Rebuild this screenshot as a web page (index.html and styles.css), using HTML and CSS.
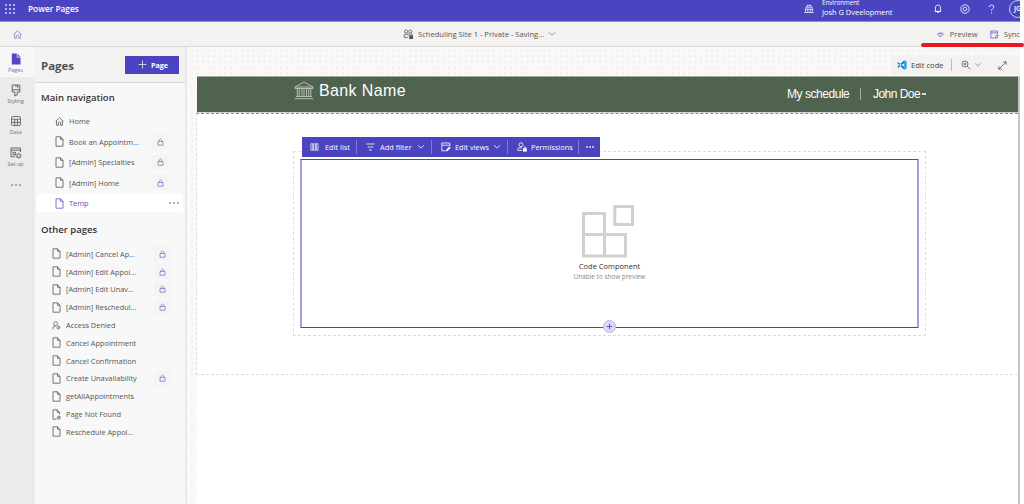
FILE: index.html
```html
<!DOCTYPE html>
<html lang="en">
<head>
<meta charset="utf-8">
<title>Power Pages</title>
<link rel="stylesheet" href="styles.css">
</head>
<body>
<svg class="sprite" aria-hidden="true">
  <symbol id="page" viewBox="0 0 9 11"><path d="M1 .8h4.5L8 3.3v6.9H1zM5.5.8v2.5H8"/></symbol>
  <symbol id="page-lock" viewBox="0 0 9 11"><path d="M4.5 10.2H1V.8h4.2L7.5 3.3v2M5.2.8v2.5h2.3"/><circle cx="6.9" cy="8.6" r="1.5"/><path d="M6 9.5l1.8-1.8"/></symbol>
  <symbol id="house" viewBox="0 0 9 9"><path d="M.6 4.5L4.5.8l3.9 3.7M1.6 3.8v4.5h1.8V5.5q1.1-1.4 2.2 0v2.8h1.8V3.8"/></symbol>
  <symbol id="lock" viewBox="0 0 7 8"><path d="M1 3.5h5v3.7H1zM2.1 3.4V2.2q1.4-2.6 2.8 0v1.2"/></symbol>
  <symbol id="person" viewBox="0 0 10 10"><circle cx="4" cy="3" r="2.2"/><path d="M.7 9.3Q.9 5.4 4 5.3"/><circle cx="7.2" cy="7.3" r="1.6"/><path d="M6.1 8.4l2.2-2.2"/></symbol>
  <symbol id="chevron" viewBox="0 0 8 6"><path d="M1 1.2l3 3 3-3"/></symbol>
</svg>
<div class="app">
  <header class="topbar">
    <svg class="waffle" viewBox="0 0 10 10"><path d="M0 1h2M4 1h2M8 1h2M0 5h2M4 5h2M8 5h2M0 9h2M4 9h2M8 9h2"/></svg>
    <span class="brand">Power Pages</span>
    <div class="account">
      <svg class="env-icon" viewBox="0 0 10 10"><path d="M2 4.6V3.2h1V1.3h4v1.9h1v1.4M.8 5.2h8.4M1.6 5.2v2.5M8.4 5.2v2.5M.3 8.5h9.4M3.3 3.2h3.4M3.8 5.2v2.5M6.2 5.2v2.5"/></svg>
      <div class="env"><span>Environment</span><span class="env-name">Josh G Dveelopment</span></div>
      <svg class="bell" viewBox="0 0 8 10"><path d="M1.5 7.3V3Q1.7 1 4 1t2.5 2v4.3zM.7 7.5h6.6M3 8q1 1.6 2 0"/></svg>
      <svg class="gear" viewBox="0 0 10 10"><path d="M3.6.8h2.8l.6 1.1 1.4.3.9 2-.7.8.7 1.3-1 1.6-1.3.2-.7 1.2H3.7L3 8.1 1.6 7.8.7 6.1 1.3 5 .7 3.7l1-1.5L3 1.9z"/><circle cx="5" cy="5" r="1.8"/></svg>
      <svg class="help" viewBox="0 0 7 10"><path d="M1.2 3Q1.3 1 3.5 1q2.3 0 2.3 1.9c0 1.7-2.3 1.9-2.3 4M3.5 8.3v1.2"/></svg>
      <span class="avatar">JG</span>
    </div>
  </header>
  <div class="commandbar">
    <svg class="home" viewBox="0 0 9 9"><use href="#house"/></svg>
    <div class="site">
      <svg class="site-icon" viewBox="0 0 11 10"><circle cx="3.1" cy="2.6" r="1.6"/><circle cx="7.4" cy="2.6" r="1.6"/><path d="M4.8 8.4H1.2Q.5 4.9 3.1 5q2.2.1 2.2 1.6M5.4 5.1q3.7-.7 4.2.7"/><path class="solid" d="M6.2 6.2h3.8V10H6.2z"/></svg>
      <span>Scheduling Site 1 - Private - Saving...</span>
      <svg class="chev" viewBox="0 0 8 6"><use href="#chevron"/></svg>
    </div>
    <div class="preview">
      <svg class="eye" viewBox="0 0 9 7"><path d="M.8 3.7Q4.4-.1 8.2 3.7"/><circle cx="4.5" cy="4" r="1.6"/></svg>
      <span class="preview-label">Preview</span>
      <svg class="sync" viewBox="0 0 9 9"><path d="M4 8H.8V1h6.7v3M.8 2.9h6.7M5 6q1.5-1.5 3 0M8 7.3q-1.5 1.5-3 0M8 4.7V6H6.7M5 8.6V7.3h1.3"/></svg>
      <span>Sync</span>
    </div>
  </div>
  <span class="redline"></span>
  <div class="workspace">
    <nav class="rail">
      <a class="rail-item current"><svg viewBox="0 0 10 12"><path class="solid" d="M.8.5h5v4h3.7v7H.8zM6.6.7l2.8 3H6.6z"/></svg><span>Pages</span></a>
      <a class="rail-item"><svg viewBox="0 0 10 12"><path d="M1.2 1h7.6v7H6.2v2.8L3.8 12V8H1.2zM1.2 5.8h7.6M5 1v2M6.8 1v3"/></svg><span>Styling</span></a>
      <a class="rail-item"><svg viewBox="0 0 11 12"><rect x=".6" y="1" width="9.8" height="10" rx="1.5"/><path d="M.6 4h9.8M.6 7.5h9.8M4 4v7M7.2 4v7"/></svg><span>Data</span></a>
      <a class="rail-item"><svg class="wide" viewBox="0 0 12 12"><path d="M5 9.8H1V1h9.5v4M1 3.2h9.5M3 5.3h2.5v2.5H3z"/><circle cx="8.6" cy="8.7" r="1.8"/><path d="M8.6 5.9v1M8.6 10.5v1M5.8 8.7h1M10.4 8.7h1M6.6 6.7l.8.8M9.9 10l.8.8M10.6 6.7l-.8.8M7.3 10l-.8.8"/></svg><span>Set up</span></a>
      <svg class="more rail-more" viewBox="0 0 10 2"><path d="M.5 1h1.3M4.4 1h1.3M8.3 1h1.3"/></svg>
    </nav>
    <aside class="pages">
      <div class="pages-head"><h1>Pages</h1><button><svg viewBox="0 0 10 10"><path d="M5 .5v9M.5 5h9"/></svg><span>Page</span></button></div>
      <h2>Main navigation</h2>
      <ul class="main-list">
        <li><svg class="ico"><use href="#house"/></svg><span>Home</span></li>
        <li><svg class="ico"><use href="#page"/></svg><span>Book an Appointm...</span><i><svg><use href="#lock"/></svg></i></li>
        <li><svg class="ico"><use href="#page"/></svg><span>[Admin] Specialties</span><i><svg><use href="#lock"/></svg></i></li>
        <li><svg class="ico"><use href="#page"/></svg><span>[Admin] Home</span><i><svg><use href="#lock"/></svg></i></li>
        <li class="selected"><svg class="ico"><use href="#page"/></svg><span>Temp</span><svg class="more" viewBox="0 0 10 2"><path d="M.5 1h1.3M4.4 1h1.3M8.3 1h1.3"/></svg></li>
      </ul>
      <h2 class="other-title">Other pages</h2>
      <ul class="other-list">
        <li><svg class="ico"><use href="#page"/></svg><span>[Admin] Cancel Ap...</span><i><svg><use href="#lock"/></svg></i></li>
        <li><svg class="ico"><use href="#page"/></svg><span>[Admin] Edit Appoi...</span><i><svg><use href="#lock"/></svg></i></li>
        <li><svg class="ico"><use href="#page"/></svg><span>[Admin] Edit Unav...</span><i><svg><use href="#lock"/></svg></i></li>
        <li><svg class="ico"><use href="#page"/></svg><span>[Admin] Reschedul...</span><i><svg><use href="#lock"/></svg></i></li>
        <li><svg class="ico"><use href="#person"/></svg><span>Access Denied</span></li>
        <li><svg class="ico"><use href="#page"/></svg><span>Cancel Appointment</span></li>
        <li><svg class="ico"><use href="#page"/></svg><span>Cancel Confirmation</span></li>
        <li><svg class="ico"><use href="#page"/></svg><span>Create Unavailability</span><i><svg><use href="#lock"/></svg></i></li>
        <li><svg class="ico"><use href="#page"/></svg><span>getAllAppointments</span></li>
        <li><svg class="ico"><use href="#page-lock"/></svg><span>Page Not Found</span></li>
        <li><svg class="ico"><use href="#page"/></svg><span>Reschedule Appoi...</span></li>
      </ul>
    </aside>
    <main class="canvas">
      <div class="canvas-tools">
        <svg class="vscode" viewBox="0 0 10 10"><path class="blue-dark" d="M.3 3l1-.8L7.2 7v2.8zM.3 7l1 .8L7.2 3V.2z"/><path class="blue" d="M7 .2l2.7 1v7.6l-2.7 1z"/></svg>
        <span class="edit-code">Edit code</span><b></b>
        <svg class="zoom" viewBox="0 0 10 10"><circle cx="4" cy="4" r="3"/><path d="M6.2 6.2l3.2 3.2M2.5 4h3M4 2.5v3"/></svg>
        <svg class="chev" viewBox="0 0 8 6"><use href="#chevron"/></svg>
        <svg class="expand" viewBox="0 0 10 10"><path d="M1 9L9 1M5.8 1H9v3.2M1 5.8V9h3.2"/></svg>
      </div>
      <div class="site-frame">
        <div class="site-header">
          <svg class="bank" viewBox="0 0 20 19"><path d="M1 6L10 1.2 19 6zM1 6v1.5h18V6M2 15.5h16M.8 17.7h18.4"/><path d="M3.3 7.5v8M5.3 7.5v8M8 7.5v8M10 7.5v8M12.5 7.5v8M14.7 7.5v8M16.8 7.5v8"/></svg>
          <span class="bank-name">Bank Name</span>
          <span class="schedule">My schedule</span><b></b><span class="user">John Doe</span><em></em>
        </div>
        <div class="site-body">
          <div class="section">
            <div class="component">
              <svg class="blocks" viewBox="0 0 52 53"><path d="M1.5 8.5h21V51h-21zM22.5 29.5h21V51h-21zM1.5 29.5h21M32.8 1.5h17.7v18H32.8z"/></svg>
              <strong>Code Component</strong>
              <small>Unable to show preview</small>
            </div>
            <span class="add"><svg viewBox="0 0 8 8"><path d="M4 .7v6.6M.7 4h6.6"/></svg></span>
            <div class="toolbar">
              <svg class="t-list" viewBox="0 0 9 9"><path d="M.5.8h2v7.4h-2zM3.5.8h2v7.4h-2zM6.5.8h2v7.4h-2z"/></svg><span class="t1">Edit list</span><b></b>
              <svg class="t-filter" viewBox="0 0 9 8"><path d="M.3 1h8.4M1.7 4h5.6M3 7h3"/></svg><span class="t2">Add filter</span><svg class="t-chev"><use href="#chevron"/></svg><b></b>
              <svg class="t-view" viewBox="0 0 10 10"><path d="M4.8 8.8H.8V1h8v3M.8 3.2h8"/><path class="solid" d="M5 9.6l.5-2L8.3 4.5l1.3 1.2-2.7 3z"/></svg><span class="t3">Edit views</span><svg class="t-chev"><use href="#chevron"/></svg><b></b>
              <svg class="t-perm" viewBox="0 0 10 10"><circle cx="4" cy="2.8" r="2"/><path d="M5.2 8.4H.8q-.7-2.4 1.2-2.5h3"/><path class="solid" d="M6 6.3h3.8v3.3H6z"/><path d="M6.8 6.5q0-1.7 1.1-1.7T9 6.5"/></svg><span class="t4">Permissions</span><b></b>
              <svg class="more t-more" viewBox="0 0 8 2"><path d="M.2 1h1.6M3.2 1h1.6M6.2 1h1.6"/></svg>
            </div>
          </div>
        </div>
      </div>
    </main>
  </div>
</div>
</body>
</html>
```
FILE: styles.css
```css
* { box-sizing: border-box; }
body { margin: 0; background: #fff; font-family: "Open Sans", "Noto Sans", sans-serif; font-size: 7.5px; color: #555; overflow: hidden; }
svg { fill: none; stroke: currentColor; stroke-width: .8; flex: none; display: block; overflow: visible; }
.solid { fill: currentColor; stroke: none; }
.sprite { position: absolute; width: 0; height: 0; }
span { white-space: nowrap; }
.app { width: 1020px; height: 504px; display: flex; flex-direction: column; overflow: hidden; }
.topbar { height: 22px; flex: none; display: flex; align-items: flex-start; padding-left: 5px; background: #4b44c0; border-bottom: 1px solid #8e8ad8; color: #fff; overflow: hidden; }
.waffle { width: 10px; height: 10px; margin-top: 4px; stroke-width: 1.5; color: #d8d6f5; }
.brand { margin: 3px 0 0 13px; font-size: 8.3px; line-height: 12px; font-weight: 600; }
.account { margin-left: auto; display: flex; align-items: flex-start; }
.env-icon { width: 10px; height: 10px; margin-top: 4px; }
.env { display: flex; flex-direction: column; margin: -3px 0 0 8px; width: 73px; font-size: 6.2px; line-height: 11px; }
.env-name { font-size: 7.45px; line-height: 8px; }
.bell { width: 8px; height: 10px; margin: 4px 0 0 39px; }
.gear { width: 10px; height: 10px; margin: 4px 0 0 18px; }
.help { width: 7px; height: 10px; margin: 4px 0 0 18px; }
.avatar { width: 18px; height: 18px; border: 1px solid #c9c7f0; border-radius: 50%; margin: 0 -7px 0 14px; font-size: 7px; font-weight: 600; line-height: 16px; padding-left: 4px; overflow: hidden; }
.commandbar { height: 25px; flex: none; display: flex; align-items: center; background: #f3f2f1; border-bottom: 1px solid #dad9d8; padding-left: 13px; }
.home { width: 9px; height: 9px; color: #8580d0; margin-right: 381px; }
.site { display: flex; align-items: center; }
.site-icon { width: 11px; height: 10px; margin-right: 4px; }
.site span { width: 127px; font-size: 7.6px; }
.chev { width: 8px; height: 6px; color: #888; margin-left: 3px; }
.preview { margin-left: auto; display: flex; align-items: center; font-size: 7.6px; }
.eye { width: 9px; height: 7px; margin-right: 5px; color: #746fd0; }
.preview-label { width: 27px; margin-right: 13px; }
.sync { width: 9px; height: 9px; margin-right: 5px; color: #655fc8; }
.redline { position: absolute; left: 921px; top: 43px; width: 103px; height: 4px; border-radius: 2px; background: #e9171e; z-index: 2; }
.workspace { flex: 1; min-height: 0; display: flex; }
.rail { width: 35px; flex: none; background: #ebebeb; display: flex; flex-direction: column; align-items: center; }
.rail-item { width: 35px; height: 31.3px; padding: 7px 4px 0 0; display: flex; flex-direction: column; align-items: center; font-size: 5.8px; line-height: 8px; color: #777; letter-spacing: -.2px; }
.rail-item svg { width: 10px; height: 12px; stroke-width: 1; color: #666; }
.rail-item .wide { width: 12px; }
.rail-item span { margin-top: 1px; }
.rail-item.current { background: #f7f7f7; color: #7670c9; height: 30px; padding-top: 6px; }
.rail-item.current svg { color: #5149c2; }
.rail-more { margin: 13px 4px 0 0; }
.more { width: 10px; height: 2px; stroke-width: 1.3; color: #666; }
.pages { width: 152px; flex: none; background: #f8f8f8; border-right: 2px solid #e9e8e8; }
.pages-head { height: 36px; padding: 0 6px 0 6px; border-bottom: 1px solid #d8d7d6; display: flex; align-items: center; justify-content: space-between; background: #f3f2f1; }
h1 { margin: 2px 0 0; font-size: 11.4px; line-height: 16px; font-weight: 700; color: #505050; }
button { width: 54px; height: 18px; margin: 0; padding: 0 0 0 2px; border: 0; background: #4b44c0; color: #fff; display: flex; align-items: center; justify-content: center; gap: 4px; font: 700 7.2px "Open Sans"; }
button svg { width: 9px; height: 9px; }
h2 { margin: 8px 0 0 6px; font-size: 9.5px; line-height: 14px; font-weight: 600; color: #333; }
ul { list-style: none; margin: 0; padding: 0; }
.main-list { margin: 6px 0 0 2px; }
li { display: flex; align-items: center; height: 17.8px; padding-left: 17px; color: #555; }
.main-list li { height: 20.5px; padding-left: 18px; }
.ico { width: 9px; height: 11px; margin-right: 5px; }
.main-list li:first-child .ico { height: 9px; }
li > span { width: 88px; font-size: 7.4px; line-height: 10px; }
i { width: 17px; height: 15px; display: flex; align-items: center; justify-content: center; background: #f5f4f5; color: #8279ca; }
i svg { width: 7px; height: 8px; }
.main-list i { margin-left: -5px; }
.main-list .selected { height: 18px; margin-top: 1px; background: #fff; color: #5b50c7; width: 146px; }
.selected .more { margin-left: 12px; }
.other-title { margin-top: 11px; }
.other-list { margin-top: 8px; }
.canvas { flex: 1; min-width: 0; display: flex; flex-direction: column; background: #faf9f8 radial-gradient(circle at 3px 3px, #eeeceb .8px, transparent 1.1px) 2px 1px / 5.6px 5.6px; }
.canvas-tools { align-self: flex-end; width: 129px; height: 20px; margin-top: 8px; display: flex; align-items: center; background: #f3f2f1; padding-left: 6px; flex: none; }
.vscode { width: 10px; height: 10px; stroke: none; margin-right: 4px; }
.blue { fill: #2daaf0; } .blue-dark { fill: #0878bd; }
.edit-code { width: 40px; font-size: 7.6px; color: #444; }
b { width: 1px; height: 12px; background: #bbb; }
.zoom { width: 10px; height: 10px; margin-left: 9px; }
.expand { width: 9px; height: 9px; margin-left: 16px; color: #444; }
.site-frame { flex: 1; margin: 1px 0 0 10px; border-right: 2px solid #c6c5cd; background: #fff; display: flex; flex-direction: column; min-height: 0; }
.site-header { height: 37px; flex: none; padding-left: 97px; background: #50634e; border-top: 1px solid #a0aba0; border-bottom: 1px solid #d4d4d4; color: #fff; display: flex; align-items: flex-start; font-family: "Liberation Sans", sans-serif; }
.bank { width: 20px; height: 19px; margin-top: 4px; color: #b7beb5; stroke-width: 1; }
.bank-name { width: 468px; margin-left: 5px; font-size: 16px; line-height: 27px; letter-spacing: .38px; }
.schedule { width: 73px; font-size: 12px; line-height: 34px; letter-spacing: -.46px; }
.site-header b { background: #9eaa9e; margin-top: 11px; }
.user { margin-left: 12px; font-size: 12px; line-height: 34px; letter-spacing: -.54px; }
.site-header em { width: 4px; height: 2px; background: #d4dad4; margin: 16px 0 0 2px; }
.site-body { height: 262px; flex: none; border: 1px dashed #dedede; border-top-color: #888; padding: 37px 92px 0 96px; border-right: 0; margin-left: -1px; }
.section { position: relative; height: 185px; border: 1px dashed #dedede; padding: 7px 6px 7px 6px; }
.component { height: 169px; border: solid #4b44c0; border-width: 1px 2px; border-left-color: #a19ee0; border-right-color: #a19ee0; display: flex; flex-direction: column; align-items: center; padding-top: 45px; }
.blocks { width: 52px; height: 53px; stroke-width: 3; color: #d0d0cf; margin-right: 3px; }
strong { font-size: 7.5px; line-height: 11px; font-weight: 400; color: #333; margin-top: 3px; }
small { font-size: 6.4px; line-height: 10px; color: #888; }
.add { position: absolute; left: 309px; bottom: 2px; width: 13px; height: 13px; border: 1px solid #b9b5e7; border-radius: 50%; background: #dddbf3; color: #4b44c0; padding: 2px; }
.add svg { width: 7px; height: 7px; stroke-width: 1; }
.toolbar { position: absolute; left: 8px; top: -15px; width: 298px; height: 20px; background: #4b44c0; color: #fff; display: flex; align-items: center; padding-left: 8px; font-size: 7.4px; }
.toolbar b { height: 14px; background: #817ccf; }
.t-list { width: 9px; height: 8px; margin-right: 6px; }
.t1 { width: 31px; } .t2 { width: 37px; } .t3 { width: 38px; } .t4 { width: 47px; }
.t-filter { width: 9px; height: 8px; margin: 0 5px 0 9px; }
.t-chev { width: 8px; height: 6px; margin-right: 6px; }
.t-view { width: 10px; height: 10px; margin: 0 4px 0 9px; }
.t-perm { width: 10px; height: 10px; margin: 0 4px 0 9px; }
.t-more { width: 8px; color: #fff; margin-left: 7px; }
```
